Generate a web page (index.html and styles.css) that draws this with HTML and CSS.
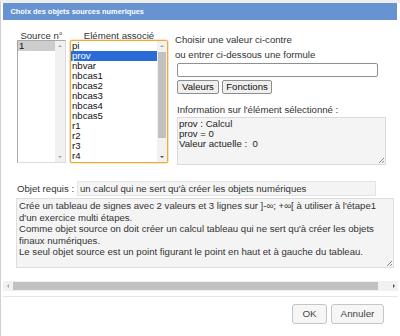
FILE: index.html
```html
<!DOCTYPE html>
<html lang="fr">
<head>
<meta charset="utf-8">
<title>Choix des objets sources numeriques</title>
<link rel="stylesheet" href="styles.css">
</head>
<body>
<div class="dialog">
  <div class="titlebar">Choix des objets sources numeriques</div>
  <div class="content">
    <div class="top">
      <div class="col src">
        <div class="lbl">Source n°</div>
        <div class="list list-src">
          <div class="items">
            <div class="item gray">1</div>
          </div>
          <div class="vscroll off">
            <span class="arr up"></span>
            <span class="track"></span>
            <span class="arr down"></span>
          </div>
        </div>
      </div>
      <div class="col elt">
        <div class="lbl">Elément associé</div>
        <div class="list list-elt">
          <div class="items">
            <div class="item">pi</div>
            <div class="item blue">prov</div>
            <div class="item">nbvar</div>
            <div class="item">nbcas1</div>
            <div class="item">nbcas2</div>
            <div class="item">nbcas3</div>
            <div class="item">nbcas4</div>
            <div class="item">nbcas5</div>
            <div class="item">r1</div>
            <div class="item">r2</div>
            <div class="item">r3</div>
            <div class="item">r4</div>
          </div>
          <div class="vscroll">
            <span class="arr up"></span>
            <span class="thumb"></span>
            <span class="track"></span>
            <span class="arr down"></span>
          </div>
        </div>
      </div>
      <div class="right">
        <div class="line">Choisir une valeur ci-contre</div>
        <div class="line l2">ou entrer ci-dessous une formule</div>
        <div class="formula"></div>
        <div class="btns">
          <span class="sbtn b1">Valeurs</span>
          <span class="sbtn b2">Fonctions</span>
        </div>
        <div class="line info-lbl">Information sur l'élément sélectionné :</div>
        <div class="info"><div>prov : Calcul</div><div>prov = 0</div><div>Valeur actuelle :&nbsp; 0</div><span class="grip"></span></div>
      </div>
    </div>
    <div class="req">
      <span class="req-lbl">Objet requis :</span>
      <div class="req-input">un calcul qui ne sert qu'à créer les objets numériques</div>
    </div>
    <div class="desc">
      <div>Crée un tableau de signes avec 2 valeurs et 3 lignes sur ]-∞; +∞[ à utiliser à l'étape1</div>
      <div>d'un exercice multi étapes.</div>
      <div>Comme objet source on doit créer un calcul tableau qui ne sert qu'à créer les objets</div>
      <div>finaux numériques.</div>
      <div>Le seul objet source est un point figurant le point en haut et à gauche du tableau.</div>
      <span class="grip"></span>
    </div>
  </div>
  <div class="hscroll">
    <span class="harr left"></span>
    <span class="hthumb"></span>
    <span class="htrack"></span>
    <span class="harr right"></span>
  </div>
  <div class="buttonpane">
    <span class="btn ok">OK</span>
    <span class="btn cancel">Annuler</span>
  </div>
</div>
</body>
</html>
```
FILE: styles.css
```css
html, body {
  margin: 0;
  padding: 0;
  background: #ffffff;
}
body {
  width: 400px;
  height: 336px;
  overflow: hidden;
  font-family: "Liberation Sans", Arial, sans-serif;
  font-size: 9.6px;
  color: #2a2a2a;
}
.dialog {
  box-sizing: border-box;
  height: 336px;
  border-left: 1px solid #cfcfcf;
  border-top: 3px solid #eeeeee;
  background: #ffffff;
}
.titlebar {
  margin: 0 3px 0 2px;
  height: 17px;
  line-height: 17px;
  background: #6893d2;
  color: #ffffff;
  font-weight: bold;
  font-size: 7.4px;
  padding-left: 7.5px;
}
.content {
  padding-left: 15px;
}
.top {
  display: flex;
  margin-top: 11px;
}
.col {
  display: flex;
  flex-direction: column;
}
.src {
  width: 49px;
  margin-left: 1px;
}
.elt {
  width: 98px;
  margin-left: 4px;
}
.lbl {
  height: 9px;
  line-height: 10px;
  text-align: center;
  color: #333;
  white-space: nowrap;
}
.list {
  box-sizing: border-box;
  height: 123px;
  display: flex;
  background: #fff;
}
.list-src {
  border: 1px solid #a9a9a9;
  border-right-color: #dcdcdc;
  border-bottom-color: #dcdcdc;
}
.list-elt {
  border: 1px solid #f0a93a;
  border-radius: 2px;
  box-shadow: 0 0 0 0.6px #f6cf8a;
}
.items {
  flex: 1;
  overflow: hidden;
}
.item {
  height: 10px;
  line-height: 10px;
  padding-left: 1px;
  color: #111;
  white-space: nowrap;
}
.item.gray {
  background: #cdcdcd;
}
.item.blue {
  background: #2b6bd7;
  color: #ffffff;
}
.vscroll {
  width: 10px;
  display: flex;
  flex-direction: column;
  background: #f1f1f1;
}
.vscroll .arr {
  height: 10px;
  position: relative;
}
.vscroll .arr::after {
  content: "";
  position: absolute;
  left: 3px;
  width: 0;
  height: 0;
  border-left: 2px solid transparent;
  border-right: 2px solid transparent;
}
.vscroll .up::after {
  top: 4px;
  border-bottom: 2px solid #a3a3a3;
}
.vscroll .down::after {
  top: 4px;
  border-top: 2px solid #505050;
}
.vscroll.off .down::after {
  border-top-color: #a3a3a3;
}
.vscroll .thumb {
  height: 86px;
  margin: 1px 1px 0 1px;
  background: #c1c1c1;
}
.vscroll .track {
  flex: 1;
}
.right {
  margin-left: 7px;
  display: flex;
  flex-direction: column;
}
.line {
  line-height: 12px;
  height: 12px;
  white-space: nowrap;
  color: #333;
  margin-top: 3px;
}
.formula {
  box-sizing: border-box;
  margin: 2px 0 0 2px;
  width: 201px;
  height: 14px;
  border: 1px solid #8f8f8f;
  border-radius: 2px;
  background: #fff;
}
.btns {
  display: flex;
  gap: 3px;
  margin: 3px 0 0 2px;
}
.sbtn {
  box-sizing: border-box;
  height: 14px;
  line-height: 12px;
  text-align: center;
  border: 1px solid #8d8d8d;
  border-radius: 2px;
  background: #efefef;
  color: #111;
}
.b1 { width: 42px; }
.b2 { width: 50px; }
.info-lbl {
  margin-top: 10px;
  margin-left: 2px;
}
.info {
  position: relative;
  box-sizing: border-box;
  margin: 1px 0 0 2px;
  width: 209px;
  height: 48px;
  border: 1px solid #dadada;
  background: #f4f4f4;
  padding: 1px 0 0 1px;
  line-height: 10px;
  color: #222;
  white-space: pre;
}
.grip {
  position: absolute;
  right: 1px;
  bottom: 1px;
  width: 5px;
  height: 5px;
  background: linear-gradient(135deg, transparent 45%, #8a8a8a 45%, #8a8a8a 55%, transparent 55%, transparent 75%, #8a8a8a 75%, #8a8a8a 85%, transparent 85%);
}
.req {
  display: flex;
  align-items: center;
  margin-top: 16px;
}
.req-lbl {
  margin-left: 1px;
  width: 60px;
  white-space: nowrap;
  color: #333;
}
.req-input {
  box-sizing: border-box;
  width: 299px;
  height: 15px;
  line-height: 13px;
  border: 1px solid #e3e3e3;
  background: #f4f4f4;
  padding-left: 2px;
  color: #333;
  white-space: nowrap;
}
.desc {
  position: relative;
  box-sizing: border-box;
  margin-top: 2px;
  width: 378px;
  height: 70px;
  border: 1px solid #dedede;
  background: #f4f4f4;
  padding: 1px 0 0 2px;
  line-height: 11.6px;
  color: #333;
  white-space: nowrap;
}
.hscroll {
  display: flex;
  height: 10px;
  margin: 13px 2px 0 2px;
  background: #f1f1f1;
}
.harr {
  width: 10px;
  position: relative;
}
.harr::after {
  content: "";
  position: absolute;
  top: 3px;
  width: 0;
  height: 0;
  border-top: 2px solid transparent;
  border-bottom: 2px solid transparent;
}
.harr.left::after {
  left: 4px;
  border-right: 2px solid #a3a3a3;
}
.harr.right::after {
  left: 5px;
  border-left: 2px solid #505050;
}
.hthumb {
  width: 365px;
  margin: 1px 0;
  background: #c1c1c1;
}
.htrack {
  flex: 1;
}
.buttonpane {
  margin: 5px 2px 0 2px;
  border-top: 1px solid #e6e6e6;
  display: flex;
  justify-content: flex-end;
  gap: 4px;
  padding: 7px 14px 0 0;
}
.btn {
  box-sizing: border-box;
  height: 20px;
  line-height: 18px;
  text-align: center;
  border: 1px solid #c5c5c5;
  border-radius: 3px;
  background: #f6f6f6;
  color: #454545;
  font-size: 9.8px;
}
.ok { width: 35px; }
.cancel { width: 53px; }
```
